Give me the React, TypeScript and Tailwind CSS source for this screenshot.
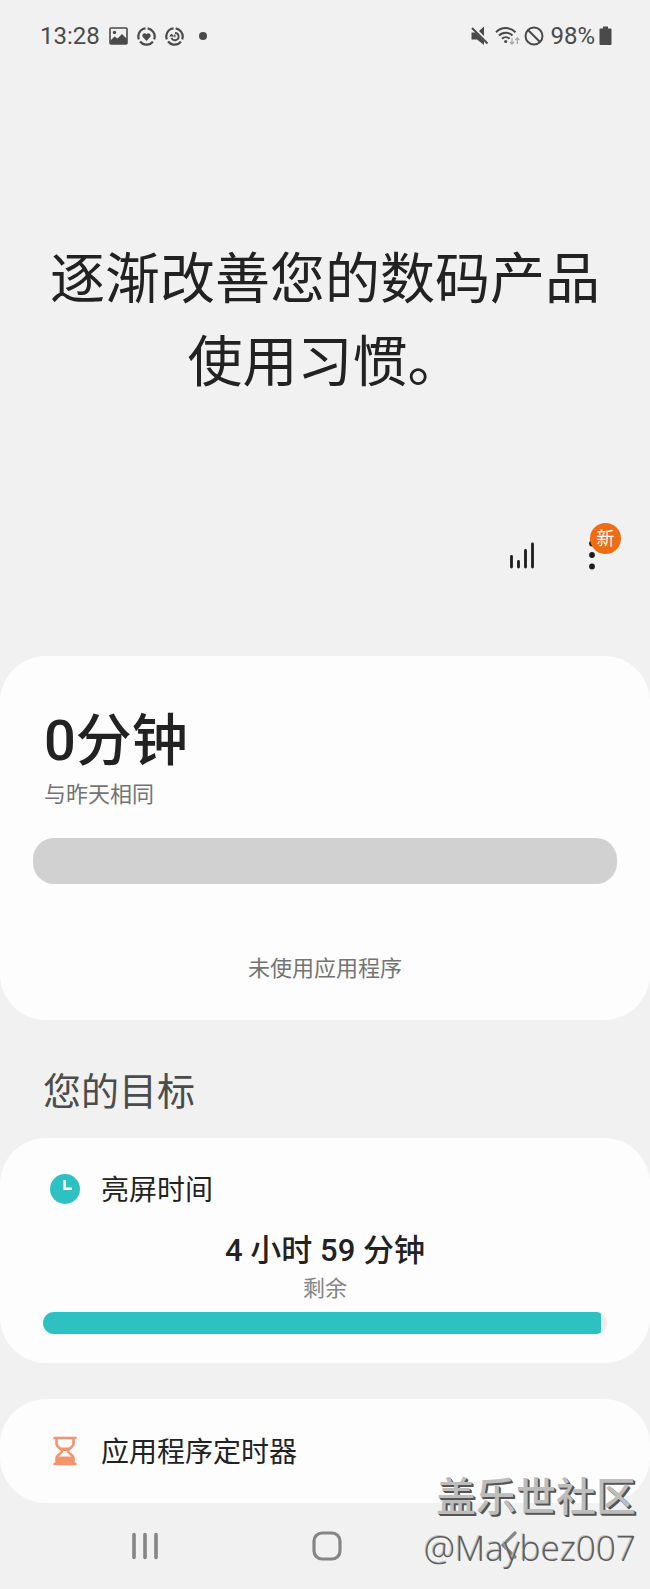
type IProps = {
  children: React.ReactNode;
};

type IGoalProps = {
  icon: React.ReactNode;
  title: string;
};

function StatusBar() {
  return (
    <header className="flex h-[72px] items-center justify-between pl-10 pr-[38px] text-2xl text-[#4a4a4a]">
      <div className="flex items-center gap-[9px]">
        <span>13:28</span>
        <svg width="19" height="18" viewBox="0 0 19 18" aria-hidden="true">
          <rect x="1" y="1" width="17" height="16" rx="1" fill="none" stroke="currentColor" strokeWidth="1.6" />
          <circle cx="5.5" cy="5.5" r="1.7" fill="currentColor" />
          <path d="M1.5 13.5 5.5 9.500l3 2L13 7l5 5V17H1.5z" fill="currentColor" />
        </svg>
        <svg width="19" height="19" viewBox="0 0 19 19" aria-hidden="true">
          <Ring />
          <path d="M9.5 14 5.8 10a2.3 2.3 0 0 1 3.7-2.8A2.3 2.3 0 0 1 13.2 10z" fill="currentColor" />
        </svg>
        <svg width="19" height="19" viewBox="0 0 19 19" aria-hidden="true">
          <Ring />
          <path d="M10 5.800a3.700 3.700 0 1 1-3.500 5" fill="none" stroke="currentColor" strokeWidth="1.8" />
          <path d="m4 9.500 2.600-3 2.600 3z" fill="currentColor" />
          <path d="M9.800 7.500v2.700" stroke="currentColor" strokeWidth="1.300" />
        </svg>
        <span className="ml-[6px] size-2 rounded-full bg-[#4a4a4a]" />
      </div>
      <div className="flex items-center gap-1">
        <svg className="mr-[2px]" width="19" height="20" viewBox="0 0 19 20" aria-hidden="true">
          <path d="M1.5 6.5h4l8.5 8.4v4L7 13.5H1.5zM9 5l5-4.5V10z" fill="currentColor" />
          <path d="m2 2 15.5 15.5" stroke="currentColor" strokeWidth="2" />
        </svg>
        <svg width="25" height="20" viewBox="0 0 25 20" aria-hidden="true">
          <g fill="none" stroke="currentColor" strokeWidth="2">
            <path d="M1 6.2a13.5 13.5 0 0 1 19.5 0" />
            <path d="M4 9.5a9.5 9.5 0 0 1 13.5 0" />
            <path d="M7 12.7a5.5 5.5 0 0 1 7.5 0" />
          </g>
          <circle cx="10.7" cy="15.5" r="1.6" fill="currentColor" />
          <path
            d="M17 12v6m-2-2 2 2.2 2-2.2M22.3 18v-6m-2 2 2-2.2 2 2.2"
            fill="none"
            stroke="#a5a5a5"
            strokeWidth="1.2"
          />
        </svg>
        <svg width="20" height="20" viewBox="0 0 20 20" aria-hidden="true">
          <g fill="none" stroke="currentColor" strokeWidth="2">
            <circle cx="10" cy="10" r="8.5" />
            <path d="m4 4 12 12" />
          </g>
        </svg>
        <span className="ml-[2px]">98%</span>
        <svg width="13" height="20" viewBox="0 0 13 20" aria-hidden="true">
          <path d="M4 .5h5v2h2.5q1 0 1 1V18q0 1-1 1h-10q-1 0-1-1V3.500q0-1 1-1H4z" fill="currentColor" />
        </svg>
      </div>
    </header>
  );
}

function Ring() {
  return (
    <circle
      cx="9.5"
      cy="9.5"
      r="8.2"
      fill="none"
      stroke="currentColor"
      strokeWidth="2.2"
      strokeDasharray="14.700 2.470"
      transform="rotate(-82 9.5 9.5)"
    />
  );
}

function ClockIcon() {
  return (
    <svg width="30" height="30" viewBox="0 0 30 30" aria-hidden="true">
      <circle cx="15" cy="15" r="15" fill="#2ec1c2" />
      <path d="M14.700 6v8.700H22" fill="none" stroke="#fdfdfd" strokeWidth="2.600" />
    </svg>
  );
}

function HourglassIcon() {
  return (
    <svg width="30" height="30" viewBox="0 0 30 30" fill="none" aria-hidden="true">
      <path d="M3.500 2h23M3.500 28h23" stroke="#f5936a" strokeWidth="2.600" />
      <path
        d="M6.500 2v5.500c0 4 5.500 5 5.500 7.500s-5.500 3.500-5.500 7.500V28M23.500 2v5.500c0 4-5.500 5-5.500 7.500s5.500 3.500 5.500 7.500V28"
        stroke="#f5936a"
        strokeWidth="2.600"
      />
      <path d="M10 11.500h10l-3 3.500h-4z" fill="#f5936a" />
      <path d="M6.500 20.500h17V28h-17z" fill="#f5936a" />
    </svg>
  );
}

function Card({ children }: IProps) {
  return <section className="rounded-[46px] bg-[#fdfdfd]">{children}</section>;
}

function GoalTitle({ icon, title }: IGoalProps) {
  return (
    <div className="flex items-center gap-[21px] pl-[50px]">
      {icon}
      <h3 className="pt-1 text-[28px] leading-8 text-[#222]">{title}</h3>
    </div>
  );
}

function NavBar() {
  return (
    <nav className="grid h-[86px] grid-cols-3 items-center pl-[54px] pr-[50px] text-[#858585]">
      <button aria-label="最近" className="flex justify-center">
        <svg width="30" height="30" viewBox="0 0 30 30" aria-hidden="true">
          <path d="M4 3.500v23M15 3.500v23M26 3.500v23" stroke="currentColor" strokeWidth="3.600" strokeLinecap="round" />
        </svg>
      </button>
      <button aria-label="主页" className="flex justify-center">
        <svg width="30" height="30" viewBox="0 0 30 30" aria-hidden="true">
          <rect x="2" y="2" width="26" height="26" rx="8" fill="none" stroke="currentColor" strokeWidth="3.200" />
        </svg>
      </button>
      <button aria-label="返回" className="flex justify-center">
        <svg width="30" height="30" viewBox="0 0 30 30" aria-hidden="true">
          <path
            d="M21 2 9 14l12 12"
            fill="none"
            stroke="currentColor"
            strokeWidth="3.200"
            strokeLinecap="round"
            strokeLinejoin="round"
          />
        </svg>
      </button>
    </nav>
  );
}

export default function App() {
  return (
    <div className="relative flex min-h-screen flex-col bg-[#f1f1f1] font-['Roboto','Noto_Sans_CJK_SC',sans-serif]">
      <StatusBar />
      <main className="grow">
        <h1 className="pt-[166px] text-center text-[55px] leading-[83px] text-[#222]">
          逐渐改善您的数码产品
          <br />
          使用习惯。
        </h1>

        <div className="mt-[131px] mb-[81px] flex justify-end gap-[30px] pr-[38px] text-[#1c1c1c]">
          <button aria-label="统计" className="flex size-10 items-center justify-center">
            <svg width="26" height="28" viewBox="0 0 26 28" aria-hidden="true">
              <path
                d="M2.500 15.500v10.500M9.500 20.500v5.500M16.500 9.500V26M23.500 3v23"
                stroke="currentColor"
                strokeWidth="2.800"
                strokeLinecap="round"
              />
            </svg>
          </button>
          <button aria-label="更多选项" className="relative flex size-10 items-center justify-center">
            <svg width="8" height="32" viewBox="0 0 8 32" fill="currentColor" aria-hidden="true">
              <circle cx="4" cy="4.500" r="2.900" />
              <circle cx="4" cy="16" r="2.900" />
              <circle cx="4" cy="27.500" r="2.900" />
            </svg>
            <span className="absolute -top-3 left-[18px] flex size-[31px] items-center justify-center rounded-full bg-[#ee6c14] text-lg leading-none text-white">
              新
            </span>
          </button>
        </div>

        <Card>
          <div className="px-[33px] pt-[53px] pb-[35px]">
            <h2 className="pl-[11px] text-[56px] leading-[64px] font-medium text-[#222]">0分钟</h2>
            <p className="mt-[6px] pl-[11px] text-[22px] leading-8 text-[#747474]">与昨天相同</p>
            <div className="mt-[27px] h-[46px] rounded-[21px] bg-[#d1d1d1]" />
            <p className="mt-[69px] text-center text-[22px] leading-8 text-[#747474]">未使用应用程序</p>
          </div>
        </Card>

        <h2 className="mt-12 mb-[22px] pl-[43px] text-[38px] leading-[48px] text-[#4c4c4c]">您的目标</h2>

        <div className="flex flex-col gap-9">
          <Card>
            <div className="pt-[33px] pb-[29px]">
              <GoalTitle icon={<ClockIcon />} title="亮屏时间" />
              <p className="mt-6 text-center text-[31px] leading-10 font-medium text-[#222]">4 小时 59 分钟</p>
              <p className="mt-[2px] text-center text-[22px] leading-8 text-[#858585]">剩余</p>
              <div className="mx-[43px] mt-[7px] h-[22px] overflow-hidden rounded-[11px] bg-[#ececec]">
                <div className="h-full w-[99%] rounded-r-[3px] bg-[#2ec1c2]" />
              </div>
            </div>
          </Card>
          <Card>
            <div className="py-[34px]">
              <GoalTitle icon={<HourglassIcon />} title="应用程序定时器" />
            </div>
          </Card>
        </div>
      </main>
      <NavBar />

      <div className="pointer-events-none absolute right-[14px] bottom-[15px] text-right font-['Open_Sans','Noto_Sans_CJK_SC',sans-serif]">
        <p className="text-[40px] leading-[52px] font-medium text-[#bdbdbd] [text-shadow:1px_1px_0_#555,2px_2px_0_#555]">
          盖乐世社区
        </p>
        <p className="text-[35px] leading-[52px] font-light text-[#5c5c5c] [text-shadow:-1px_-1px_0_#c4c4c4]">
          @Maybez007
        </p>
      </div>
    </div>
  );
}
